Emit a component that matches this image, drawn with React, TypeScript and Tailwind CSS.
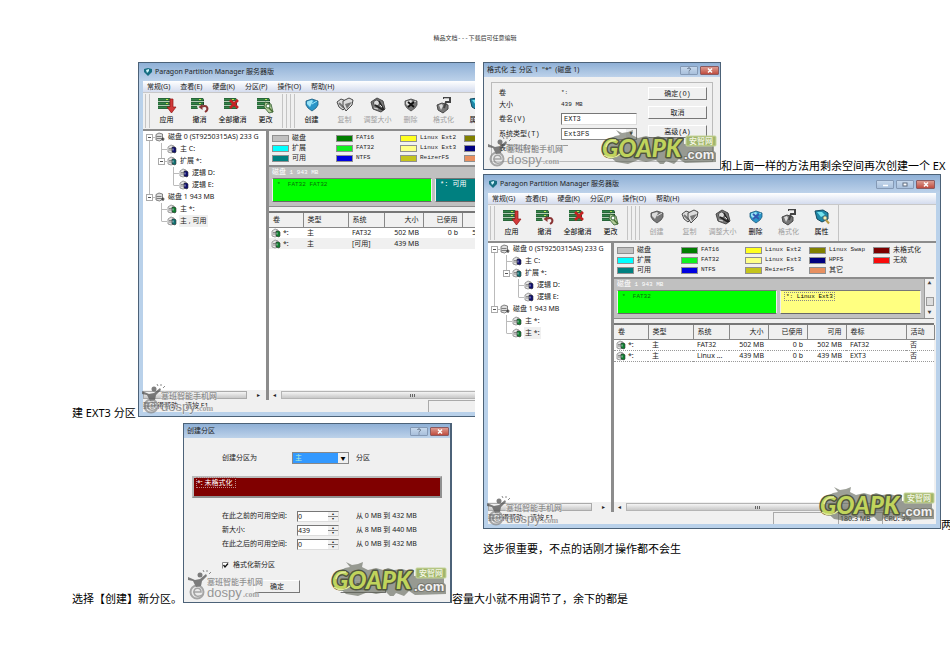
import React from 'react';

type TreeItem = { guides: string[]; color: string; label: string; selected?: boolean };
type Segment = { text: string; className: string; framed?: boolean };
type Row = { cells: string[]; className: string };

const menus = ['常规(G)', '查看(E)', '硬盘(K)', '分区(P)', '操作(O)', '帮助(H)'];

const editTools = ['应用', '撤消', '全部撤消', '更改'];
const diskTools = ['创建', '复制', '调整大小', '删除', '格式化', '属性'];

const legend = [
    { label: '磁盘', swatch: 'bg-[#c0c0c0]' },
    { label: 'FAT16', swatch: 'bg-[#007d00]' },
    { label: 'Linux Ext2', swatch: 'bg-[#ffff20]' },
    { label: 'Linux Swap', swatch: 'bg-[#808000]' },
    { label: '未格式化', swatch: 'bg-[#7d0000]' },
    { label: '扩展', swatch: 'bg-[#00ffff]' },
    { label: 'FAT32', swatch: 'bg-[#10f020]' },
    { label: 'Linux Ext3', swatch: 'bg-[#ffff88]' },
    { label: 'HPFS', swatch: 'bg-[#000080]' },
    { label: '无效', swatch: 'bg-[#f80c0c]' },
    { label: '可用', swatch: 'bg-[#008080]' },
    { label: 'NTFS', swatch: 'bg-[#0000e0]' },
    { label: 'ReizerFS', swatch: 'bg-[#c4c41c]' },
    { label: '其它', swatch: 'bg-[#e89060]' },
];

const columns = [
    { label: '卷', className: 'w-[34px] text-left' },
    { label: '类型', className: 'w-[45px] text-left' },
    { label: '系统', className: 'w-[36px] text-left' },
    { label: '大小', className: 'w-[39px] text-right' },
    { label: '已使用', className: 'w-[39px] text-right' },
    { label: '可用', className: 'w-[39px] text-right' },
    { label: '卷标', className: 'w-[60px] text-left' },
    { label: '活动', className: 'w-[28px] text-left' },
];

const baseTree: TreeItem[] = [
    { guides: ['root'], color: '#555', label: '磁盘 0 (ST9250315AS) 233 G' },
    { guides: ['v', 't'], color: '#101070', label: '主 C:' },
    { guides: ['v', 'box'], color: '#107070', label: '扩展 *:' },
    { guides: ['v', '', 't'], color: '#101070', label: '逻辑 D:' },
    { guides: ['v', '', 'l'], color: '#101070', label: '逻辑 E:' },
    { guides: ['last'], color: '#555', label: '磁盘 1 943 MB' },
    { guides: ['', 't'], color: '#108030', label: '主 *:' },
];

// One 12px cell of the tree's connecting lines
const Guide: React.FC<{ kind: string }> = ({ kind }) => (
    <svg className="h-3 w-3 shrink-0" viewBox="0 0 12 12" fill="none" stroke="#bbb">
        {(kind === 'v' || kind === 't') && <path d="M6.5 0V12" />}
        {kind === 'l' && <path d="M6.5 0V6" />}
        {(kind === 't' || kind === 'l') && <path d="M6.5 6.5H12" />}
        {kind === 'root' && <path d="M6.5 8V12M9 6.5H12" />}
        {(kind === 'last' || kind === 'box') && <path d="M6.5 0V4M9 6.5H12" />}
        {(kind === 'root' || kind === 'last' || kind === 'box') && (
            <>
                <rect x="3.5" y="3.5" width="6" height="6" fill="#fff" stroke="#aaa" />
                <path d="M5 6.5H8" stroke="#555" />
            </>
        )}
    </svg>
);

const VolumeIcon: React.FC<{ color: string }> = ({ color }) => (
    <svg className="h-[10px] w-[10px] shrink-0" viewBox="0 0 10 10">
        <path d="M1 3l3-2 3 1v6l-3 1-3-1z" fill="#e4e4e4" stroke="#888" strokeWidth=".8" />
        <path d="M2 4.5h3M2 6h3" stroke="#666" strokeWidth=".7" />
        <path d="M5 3l3 0 1 1v4l-1 1-3-1z" fill={color} stroke="#333" strokeWidth=".6" />
        <path d="M6 4.500v2" stroke="#dde" strokeWidth=".8" />
    </svg>
);

const DiskIcon = () => (
    <svg className="h-[10px] w-[10px] shrink-0" viewBox="0 0 10 10">
        <path d="M1 2.500l3-1.500 3.500 1v5.500L4.500 9 1 8z" fill="#ddd" stroke="#666" strokeWidth=".8" />
        <path d="M1.500 4.500h5M1.500 6.500h5" stroke="#666" strokeWidth=".8" />
        <path d="M6 7h3.500M8 5.500v3.500" stroke="#333" />
    </svg>
);

const StackIcon: React.FC<{ name: string }> = ({ name }) => (
    <svg className="h-[18px] w-[22px]" viewBox="0 0 22 18">
        <path d="M2 2h12l1 2v9H2z" fill="#1c4727" />
        <path d="M2 3.500h12M2 7.500h12M2 11.500h12" stroke="#35854b" strokeWidth="2" />
        <path d="M2 5.500h13M2 9.500h13" stroke="#b3ccb6" strokeWidth="1" />
        <path d="M10 3.500h2M10 7.500h2" stroke="#bce84e" />
        {name === '应用' && (
            <path d="M14 3h3v8h3l-4.500 6-4.500-6h3z" fill="#d23a3a" stroke="#8f1515" strokeWidth=".7" />
        )}
        {name === '撤消' && (
            <>
                <path d="M8 10h12v7H10z" fill="#f0f0f0" />
                <path d="M13 10.500c6-2 7 3 3 5.500" fill="none" stroke="#8a3434" strokeWidth="2" />
                <path d="M9.500 11l4-3v6z" fill="#8a3434" />
            </>
        )}
        {name === '全部撤消' && <path d="M8 4l8 8M16 4l-8 8" stroke="#c42222" strokeWidth="2.500" />}
        {name === '更改' && (
            <>
                <path d="M10 6l6 2 2 8-4 1-5-6z" fill="#b5cf9b" stroke="#2e5a30" strokeWidth=".8" />
                <circle cx="13" cy="10" r="2" fill="#fff" stroke="#386a3a" />
                <path d="M14 12l4 4" stroke="#446b30" strokeWidth="1.500" />
            </>
        )}
    </svg>
);

const GemIcon: React.FC<{ name: string; active: boolean }> = ({ name, active }) => {
    const dark = active ? '#1c5c7e' : '#484848';
    const mid = active ? '#2b95c8' : '#777';
    const light = active ? '#9be4f7' : '#dcdcdc';
    return (
        <svg className="h-[18px] w-[22px]" viewBox="0 0 22 18">
            {(name === '创建' || name === '删除') && (
                <>
                    <path d="M5 5l6-2 6 2v4l-2 3-4 3-4-3-2-3z" fill={mid} stroke={dark} strokeWidth=".8" />
                    <path d="M6 5.500l5-1.500 1 1-3 6-3-3z" fill={light} />
                    <path d="M11 8l5-3" stroke={light} />
                </>
            )}
            {name === '删除' && (
                <path d="M8 6l6 5M14 6l-6 5" stroke={active ? '#3358b0' : '#111'} strokeWidth="1.800" />
            )}
            {name === '复制' && (
                <>
                    <path d="M3 6l4-3 5 2v6l-3 3-4-3z" fill={light} stroke={dark} />
                    <path d="M5 7l5 5" stroke={mid} strokeWidth="2" />
                    <path d="M9 5l6-3 4 2-1 5-6 6-3-5z" fill={light} stroke={dark} />
                    <path d="M11 8l2 5 5-7z" fill={mid} />
                </>
            )}
            {name === '调整大小' && (
                <>
                    <path d="M4 6l6-4 6 3 2 8-4 3-8-3z" fill={mid} stroke={dark} />
                    <circle cx="9.500" cy="7" r="3" fill={light} stroke={dark} />
                    <path d="M8 9l8 5M12 5l5 9" stroke="#222" strokeWidth="1.500" />
                    <path d="M7 12l4 1M13 9l2 2" stroke={light} />
                </>
            )}
            {name === '格式化' && (
                <>
                    <path d="M4 9l5-2 6 2v4l-5 4-5-3z" fill={mid} stroke={dark} />
                    <path d="M6 9l3-1 1 2-2 4z" fill={light} />
                    <path d="M10 2h7v4h-4l-2 6" fill="none" stroke="#444" strokeWidth="2" />
                    <path d="M11 2.500h5" stroke="#bbb" />
                </>
            )}
            {name === '属性' && (
                <>
                    <path d="M4 3l8-1 5 3v6l-6 3-5-3z" fill="#1f88a8" stroke="#134a60" />
                    <path d="M6 4l5 0 3 3-4 2z" fill="#74e3ee" />
                    <circle cx="14" cy="10" r="2.200" fill="#f6efb0" stroke="#3e6472" />
                    <path d="M15 12l3 3.500" stroke="#b79b42" strokeWidth="2" />
                </>
            )}
        </svg>
    );
};

const ToolButton: React.FC<{ name: string; disabled?: boolean; children: React.ReactNode }> = ({ name, disabled, children }) => (
    <button
        type="button"
        disabled={disabled}
        className="flex w-[33px] shrink-0 flex-col items-center text-black disabled:text-[#a0a0a0]"
    >
        {children}
        <span className="leading-3 whitespace-nowrap">{name}</span>
    </button>
);

const Grip = () => (
    <div className="my-px flex gap-[3px]">
        <div className="w-px bg-[#c4c4c4]" />
        <div className="w-px bg-[#c4c4c4]" />
    </div>
);

const CaptionButton: React.FC<{ kind: 'min' | 'max' | 'help' | 'close' }> = ({ kind }) => (
    <button
        type="button"
        aria-label={kind}
        className={
            kind === 'close'
                ? 'flex h-[9px] w-[19px] items-center justify-center rounded-[1px] border border-[#8a5a60] bg-linear-to-b from-[#dc9a90] to-[#bf4c40] text-white'
                : 'flex h-[9px] w-[18px] items-center justify-center rounded-[1px] border border-[#8499b5] bg-linear-to-b from-[#c6d8ec] to-[#a9c0dc] text-[#5f6d80]'
        }
    >
        <svg className="h-[7px] w-[8px]" viewBox="0 0 8 7" fill="none" stroke="currentColor">
            {kind === 'min' && <path d="M2 4.500h5" stroke="#fff" strokeWidth="1.500" />}
            {kind === 'max' && <rect x="2" y="2" width="4" height="3" fill="#fff" />}
            {kind === 'help' && <path d="M2.500 2c0-1.500 3-1.500 3 0S4 3 4 4.500M4 5.500v1" />}
            {kind === 'close' && <path d="M2 1.500l4 4M6 1.500l-4 4" strokeWidth="1.500" />}
        </svg>
    </button>
);

const GoapkMark = () => (
    <svg className="h-9 w-[120px]" viewBox="0 0 120 36">
        <path
            d="M3 22l3-9 9-5 5-1-4-5 6 3 6-1 5-2-1 5 6 3 8-2 7 2 5-2 6 2 8-1 7 2 5-1v6l30-1v8l2 2v9l-31 1-6-4-5 5-8-3-4 5-6-6-10 2-8-2-10 4-12-2z"
            fill="#5c6154"
            opacity=".6"
        />
        <text
            x="2"
            y="29"
            className="font-['Lato','Liberation_Sans',sans-serif] text-[24px] font-black italic"
            fill="#c0d45c"
            stroke="#50563f"
            strokeWidth="3"
            strokeLinejoin="round"
            paintOrder="stroke"
        >
            GOAPK
        </text>
        <path d="M6 19c1-5 5-7 10-7M4 27c5 4 12 3 16-1" fill="none" stroke="#dfe996" strokeWidth="1.500" />
        <rect x="86" y="8" width="30" height="10" rx="1" fill="#a2b66c" stroke="#c7d69c" />
        <text x="89" y="16" className="font-['Noto_Sans_CJK_SC',sans-serif] text-[8px] font-medium" fill="#f4f7e6">安智网</text>
        <text
            x="84"
            y="31"
            className="font-['Liberation_Sans',sans-serif] text-[13px] font-bold"
            fill="#f2f2f2"
            stroke="#77786f"
            strokeWidth="2"
            paintOrder="stroke"
        >
            .com
        </text>
    </svg>
);

const DospyMark = () => (
    <svg className="h-8 w-[84px] opacity-75" viewBox="0 0 84 32">
        <circle cx="10" cy="23" r="6.500" fill="#e4e4e4" fillOpacity=".6" stroke="#8c8c8c" strokeWidth="2" />
        <path d="M6 23h8c0-5-7-5-7 0s5 5 8 3" fill="none" stroke="#8c8c8c" strokeWidth="1.500" />
        <path d="M1 8l7 3 5-1 6-5 1 2-5 5-1 5-5 1-3-6-5-1z" fill="#555" />
        <circle cx="13" cy="6" r="2.500" fill="#555" />
        <path d="M17 3l-1-2M20 3V1M22 5l2-2" stroke="#666" />
        <g stroke="#f4f4f4" strokeWidth="1" paintOrder="stroke">
            <text x="20" y="16" className="font-['Noto_Sans_CJK_SC',sans-serif] text-[8px] font-medium" fill="#6e6e6e">塞班智能手机网</text>
            <text x="20" y="28" className="font-['Liberation_Sans',sans-serif] text-[13px]" fill="#777">dospy</text>
            <text x="56" y="28" className="font-['Liberation_Serif',serif] text-[8px] font-bold" fill="#888">.com</text>
        </g>
    </svg>
);

const PartitionManager: React.FC<{
    tree: TreeItem[];
    segments: Segment[];
    rows: Row[];
    enabledTools: string[];
    detached?: boolean;
}> = ({ tree, segments, rows, enabledTools, detached }) => (
    <section className="relative flex h-[355px] w-[458px] shrink-0 flex-col border border-[#4c6278] bg-[#b9d1ea] px-1 pb-1 text-[7px] leading-3 text-[#222]">
        <header className="-mx-1 flex h-[18px] shrink-0 items-center gap-[3px] bg-linear-to-b from-[#8fb0d6] to-[#bdd2ea] pr-[5px] pl-[5px]">
            <svg className="h-2 w-2 shrink-0" viewBox="0 0 8 8">
                <path d="M0 1l4-1 4 1v3L4 8 0 4z" fill="#176e82" />
                <path d="M2 2l3-1v2L3 5z" fill="#cdf4fb" />
            </svg>
            <h2 className="flex-1 whitespace-nowrap">Paragon Partition Manager 服务器版</h2>
            <div className="flex gap-0.5">
                <CaptionButton kind="min" />
                <CaptionButton kind="max" />
                <CaptionButton kind="close" />
            </div>
        </header>
        <nav className="flex h-[11px] shrink-0 items-center gap-[10px] bg-linear-to-b from-white to-[#d4dcee] pl-1">
            {menus.map((menu) => (
                <button key={menu} type="button" className="whitespace-nowrap">{menu}</button>
            ))}
        </nav>
        <div className="flex h-[39px] shrink-0 border-t border-b-2 border-[#8c8c8c] border-t-[#c8c8c8] bg-[#f0f0f0] pl-0.5">
            <Grip />
            <div className="flex items-center">
                {editTools.map((name) => (
                    <ToolButton key={name} name={name}><StackIcon name={name} /></ToolButton>
                ))}
            </div>
            <Grip />
            <div className="w-[3px]" />
            <Grip />
            <div className="flex items-center border-r border-[#c4c4c4]">
                {diskTools.map((name) => (
                    <ToolButton key={name} name={name} disabled={!enabledTools.includes(name)}>
                        <GemIcon name={name} active={enabledTools.includes(name)} />
                    </ToolButton>
                ))}
            </div>
        </div>

        <div className="flex min-h-0 flex-1 bg-[#f0f0f0]">
            <div className="flex w-[123px] shrink-0 flex-col bg-white">
                <ul className="flex-1 overflow-hidden">
                    {tree.map((item, i) => (
                        <li key={i} className="flex h-3 items-center">
                            {item.guides.map((kind, n) => <Guide key={n} kind={kind} />)}
                            {item.guides.length === 1 ? <DiskIcon /> : <VolumeIcon color={item.color} />}
                            <span className={item.selected ? 'ml-0.5 bg-[#f0f0f0] px-px leading-3 whitespace-nowrap' : 'ml-0.5 px-px leading-3 whitespace-nowrap'}>
                                {item.label}
                            </span>
                        </li>
                    ))}
                </ul>
                <div className="flex h-[10px] items-center bg-[#f0f0f0]">
                    <div className="h-2 w-[104px] border border-[#aaa] bg-linear-to-b from-[#f4f4f4] to-[#c8c8c8]" />
                    <span className="ml-[10px] text-[6px] leading-[10px]">▸</span>
                </div>
            </div>
            <div className="w-[3px] shrink-0 bg-[#8c8c8c]" />
            <div className="flex w-[322px] flex-col pr-0.5">
                <ul className="grid h-[34px] shrink-0 grid-cols-[repeat(5,64px)] grid-rows-[10px_10px_10px] pt-0.5 pl-[3px]">
                    {legend.map((item) => (
                        <li key={item.label} className="flex items-center gap-[3px] whitespace-nowrap">
                            <span className={`h-[7px] w-[17px] border border-[#909090] ${item.swatch}`} />
                            <span className={/^[A-Z]/.test(item.label) ? "font-['Liberation_Mono',monospace] text-[6px]" : ''}>{item.label}</span>
                        </li>
                    ))}
                </ul>
                <div className="flex h-[42px] shrink-0 border-t-2 border-b border-[#8c8c8c]">
                    <div className="flex flex-1 flex-col bg-[#c0c0c0] px-[3px] pb-1">
                        <p className="font-['Liberation_Mono','Noto_Sans_CJK_SC',monospace] text-[6px] leading-[11px] text-white">
                            <span className="text-[7px]">磁盘</span> 1 943 MB
                        </p>
                        <div className="flex flex-1 gap-[3px]">
                            {segments.map((segment) => (
                                <div
                                    key={segment.text}
                                    className={`border border-t-[#777] border-r-[#eee] border-b-[#666] border-l-[#eee] px-[3px] font-['Liberation_Mono','Noto_Sans_CJK_SC',monospace] leading-[11px] whitespace-pre ${segment.className}`}
                                >
                                    <span className={segment.framed ? 'border border-dotted border-[#888] px-px' : 'px-px'}>{segment.text}</span>
                                </div>
                            ))}
                        </div>
                    </div>
                    <div className="flex w-[10px] flex-col items-center justify-between border-l border-[#999] text-[4px] leading-[10px] text-[#444]">
                        <span>▲</span>
                        <span className="mt-1.5 h-[9px] w-2 border border-[#999] bg-[#ddd]" />
                        <span>▼</span>
                    </div>
                </div>
                <div className="mt-1 flex-1 border-t-2 border-[#777] bg-white">
                    <table className="w-[320px] table-fixed border-collapse">
                        <thead>
                            <tr className="h-[14px] border-b border-[#888] bg-[#f0f0f0]">
                                {columns.map((column) => (
                                    <th key={column.label} className={`border-r border-[#888] px-1 font-normal whitespace-nowrap ${column.className}`}>
                                        {column.label}
                                    </th>
                                ))}
                            </tr>
                        </thead>
                        <tbody>
                            {rows.map((row, i) => (
                                <tr key={i} className={`h-[11px] leading-[10px] ${row.className}`}>
                                    {row.cells.map((cell, n) => (
                                        <td key={n} className={`py-0 whitespace-nowrap ${n === 0 ? 'px-0.5' : 'px-1'} ${columns[n].className}`}>
                                            {n === 0 ? (
                                                <span className="flex items-center gap-0.5"><VolumeIcon color="#108030" />{cell}</span>
                                            ) : cell}
                                        </td>
                                    ))}
                                </tr>
                            ))}
                        </tbody>
                    </table>
                </div>
                <div className="flex h-[10px] shrink-0 items-center bg-[#f0f0f0]">
                    <span className="w-3 pl-1 text-[6px] leading-[10px]">◂</span>
                    <div className="flex h-2 w-[262px] items-center justify-center gap-px border border-[#b4b4b4] bg-linear-to-b from-[#f4f4f4] to-[#c8c8c8]">
                        <span className="h-[3px] w-px bg-[#666]" />
                        <span className="h-[3px] w-px bg-[#666]" />
                        <span className="h-[3px] w-px bg-[#666]" />
                    </div>
                </div>
            </div>
        </div>

        <footer className="flex h-3 shrink-0 bg-[#f0f0f0]">
            <span className="w-[285px]">要获得帮助，请按 F1</span>
            <span className="w-[65px] border-t border-l border-[#aaa]" />
            <span className="w-11 border-t border-l border-[#aaa] pl-px">180.3 MB</span>
            <span className="border-t border-l border-[#aaa] pl-px">CPU: 3%</span>
        </footer>
        <div className="absolute bottom-px left-0.5"><DospyMark /></div>
        {detached && <div className="absolute right-0.5 bottom-[7px]"><GoapkMark /></div>}
    </section>
);

const DialogTitle: React.FC<{ title: string }> = ({ title }) => (
    <header className="flex h-[14px] items-center justify-between bg-linear-to-b from-[#8fb0d6] to-[#bdd2ea] pr-px pl-[3px]">
        <h2 className="whitespace-pre">{title}</h2>
        <div className="flex gap-0.5">
            <CaptionButton kind="help" />
            <CaptionButton kind="close" />
        </div>
    </header>
);

const PushButton: React.FC<{ label: string; className: string }> = ({ label, className }) => (
    <button
        type="button"
        className={`h-[13px] border border-t-white border-r-[#777] border-b-[#777] border-l-white bg-[#f0f0f0] leading-[10px] ${className}`}
    >
        {label}
    </button>
);

const DropDown: React.FC<{ id: string; value: string; className: string }> = ({ id, value, className }) => (
    <div className="relative">
        <select id={id} defaultValue={value} className={`block h-3 appearance-none border border-[#888] pl-0.5 leading-[10px] ${className}`}>
            <option>{value}</option>
        </select>
        <span className="pointer-events-none absolute top-px right-px h-[10px] w-[10px] bg-[#f0f0f0] text-center text-[5px] leading-[10px] text-black">▼</span>
    </div>
);

const FormatDialog = () => (
    <section className="relative h-[108px] w-[238px] shrink-0 border border-[#4c6278] bg-[#f0f0f0] text-[7px] leading-3 text-[#222]">
        <DialogTitle title={'格式化 主 分区 1  "*"  (磁盘 1)'} />
        <form className="mx-[7px] mt-[5px] flex h-20 justify-between border border-[#bbb] pt-1 pr-[5px] pl-[7px] font-['Liberation_Mono','Noto_Sans_CJK_SC',monospace]">
            <div className="grid grid-cols-[62px_76px] grid-rows-[11px_13px_15px_16px_12px] items-center">
                <span>卷</span>
                <span className="text-[6px]">*:</span>
                <span>大小</span>
                <span className="text-[6px]">439 MB</span>
                <label htmlFor="volume-name">卷名(V)</label>
                <input id="volume-name" defaultValue="EXT3" className="h-3 w-full border border-r-[#ddd] border-b-[#ddd] border-[#777] bg-white pl-0.5 text-[7px] leading-[10px]" />
                <label htmlFor="fs-type">系统类型(T)</label>
                <DropDown id="fs-type" value="Ext3FS" className="w-full bg-white" />
                <label htmlFor="surface-test" className="whitespace-nowrap">表面测试(S)</label>
                <input id="surface-test" type="checkbox" className="h-[7px] w-[7px] appearance-none border-t border-l border-[#999]" />
            </div>
            <div className="flex w-[59px] flex-col gap-[6px]">
                <PushButton label="确定(O)" className="w-full" />
                <PushButton label="取消" className="w-full" />
                <PushButton label="高级(A)" className="w-full" />
            </div>
        </form>
        <div className="absolute bottom-px left-[3px]"><DospyMark /></div>
        <div className="absolute right-0 bottom-[5px]"><GoapkMark /></div>
    </section>
);

const sizeFields = [
    { id: 'space-before', label: '在此之前的可用空间:', value: '0', range: '从 0 MB 到 432 MB' },
    { id: 'new-size', label: '新大小:', value: '439', range: '从 8 MB 到 440 MB' },
    { id: 'space-after', label: '在此之后的可用空间:', value: '0', range: '从 0 MB 到 432 MB' },
];

const CreateDialog = () => (
    <section className="relative h-[180px] w-[269px] shrink-0 border border-r-2 border-[#4c6278] bg-[#f0f0f0] text-[7px] leading-3 text-[#222]">
        <DialogTitle title="创建分区" />
        <form>
            <div className="mt-[14px] flex items-center pl-[38px]">
                <label htmlFor="partition-type" className="w-[70px]">创建分区为</label>
                <DropDown id="partition-type" value="主" className="w-[57px] bg-[#3399ff] text-[#b8f0d0]" />
                <span className="ml-[7px]">分区</span>
            </div>
            <div className="mx-2 mt-3 h-[22px] border-2 border-[#909090] border-t-[#bbb] border-l-[#bbb] bg-[#800000] px-0.5 leading-[10px] text-white">
                <span className="border border-dotted border-[#b88] pr-0.5">*: 未格式化</span>
            </div>
            <div className="mt-3 flex flex-col gap-0.5 pl-[38px]">
                {sizeFields.map((field) => (
                    <div key={field.id} className="flex h-3 items-center">
                        <label htmlFor={field.id} className="w-[75px] whitespace-nowrap">{field.label}</label>
                        <div className="flex h-[11px] w-[42px] border border-[#777] border-r-[#ddd] border-b-[#ddd] bg-white">
                            <input id={field.id} defaultValue={field.value} className="w-[30px] text-[7px] leading-[9px]" />
                            <span className="flex w-[10px] flex-col bg-[#f0f0f0] text-center text-[4px] leading-[4px]">
                                <span className="border-b border-[#888]">▴</span>
                                <span>▾</span>
                            </span>
                        </div>
                        <span className="ml-[17px] whitespace-nowrap">{field.range}</span>
                    </div>
                ))}
            </div>
            <div className="mt-[9px] flex items-center gap-1 pl-[38px]">
                <input id="format-new" type="checkbox" defaultChecked className="peer sr-only" />
                <label htmlFor="format-new" className="flex items-center gap-1">
                    <svg className="h-[7px] w-[7px]" viewBox="0 0 7 7" fill="#fff">
                        <path d="M.5 6.500V.5H6.500" stroke="#888" />
                        <path d="M1.500 3l1.500 2 3-3.500" fill="none" stroke="#111" strokeWidth="1.300" />
                    </svg>
                    格式化新分区
                </label>
            </div>
            <div className="mt-[9px] flex gap-10 pl-[70px]">
                <PushButton label="确定" className="w-[46px]" />
                <PushButton label="取消" className="w-[46px]" />
            </div>
        </form>
        <div className="absolute bottom-px left-[3px]"><DospyMark /></div>
        <div className="absolute right-0 bottom-[6px]"><GoapkMark /></div>
    </section>
);

const App: React.FC = () => {
    return (
        <div className="min-h-screen overflow-hidden bg-white pt-[34px] font-['Noto_Sans','Noto_Sans_CJK_SC',sans-serif] text-[11px] text-black">
            <p className="text-center font-['DejaVu_Sans_Mono','Noto_Sans_CJK_SC',monospace] text-[6px] leading-2 text-[#333]">精品文档---下载后可任意编辑</p>
            <main className="mt-5 flex gap-2 pl-[72px]">
                <div className="flex w-[403px] shrink-0 flex-col gap-[6px]">
                    <div className="flex items-end">
                        <p className="w-[66px] shrink-0 leading-2 whitespace-nowrap">建 EXT3 分区</p>
                        <div className="min-w-0 flex-1 overflow-hidden">
                            <PartitionManager
                                tree={[...baseTree, { guides: ['', 'l'], color: '#107070', label: '主 , 可用', selected: true }]}
                                segments={[
                                    { text: '*  FAT32 FAT32', className: 'w-[160px] bg-[#00ff00] text-[6px] text-[#087008]' },
                                    { text: '*: 可用', className: 'flex-1 bg-[#008080] text-[7px] text-white' },
                                ]}
                                rows={[
                                    { cells: ['*:', '主', 'FAT32', '502 MB', '0 b', '502 MB', 'FAT32', '否'], className: '' },
                                    { cells: ['*:', '主', '[可用]', '439 MB', '', '', '', ''], className: 'bg-[#f0f0f0]' },
                                ]}
                                enabledTools={['创建', '属性']}
                            />
                        </div>
                    </div>
                    <div className="flex items-end">
                        <p className="w-[111px] shrink-0 leading-2 whitespace-nowrap">选择【创建】新分区。</p>
                        <CreateDialog />
                        <p className="leading-2 whitespace-nowrap">容量大小就不用调节了，余下的都是</p>
                    </div>
                </div>
                <div className="flex min-w-0 flex-1 flex-col gap-1">
                    <div className="flex items-end">
                        <FormatDialog />
                        <p className="leading-2 whitespace-nowrap">和上面一样的方法用剩余空间再次创建一个 EX</p>
                    </div>
                    <div className="flex items-end">
                        <PartitionManager
                            tree={[...baseTree, { guides: ['', 'l'], color: '#108030', label: '主 *:', selected: true }]}
                            segments={[
                                { text: '*  FAT32', className: 'w-[160px] bg-[#00ff00] text-[6px] text-[#087008]' },
                                { text: '*: Linux Ext3', className: 'flex-1 bg-[#ffff80] text-[6px] text-black', framed: true },
                            ]}
                            rows={[
                                { cells: ['*:', '主', 'FAT32', '502 MB', '0 b', '502 MB', 'FAT32', '否'], className: '' },
                                { cells: ['*:', '主', 'Linux ...', '439 MB', '0 b', '439 MB', 'EXT3', '否'], className: 'border-y border-dotted border-[#999]' },
                            ]}
                            enabledTools={['删除', '属性']}
                            detached
                        />
                        <p className="leading-2 whitespace-nowrap">两</p>
                    </div>
                    <p className="mt-2 leading-4 whitespace-nowrap">这步很重要，不点的话刚才操作都不会生</p>
                </div>
            </main>
        </div>
    );
};

export default App;
